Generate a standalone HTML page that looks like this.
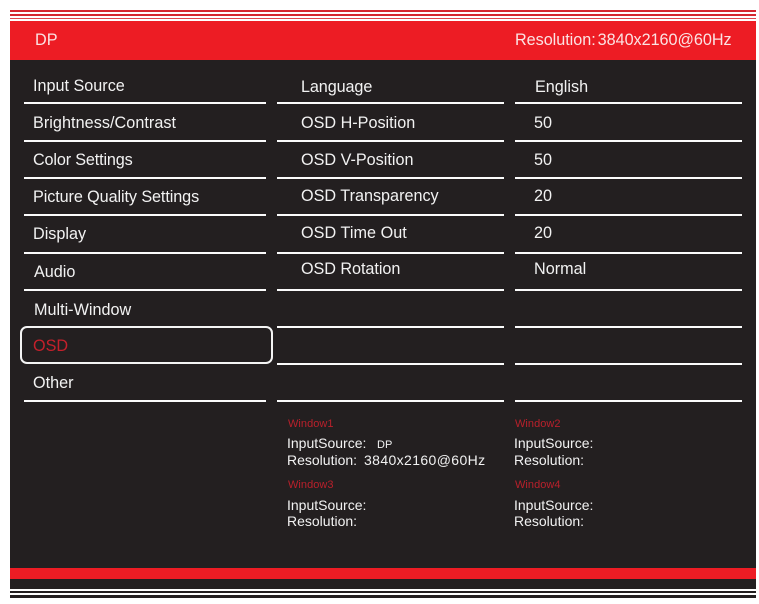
<!DOCTYPE html>
<html>
<head>
<meta charset="utf-8">
<style>
html,body{margin:0;padding:0;background:#fff}
#p{position:relative;width:759px;height:604px;overflow:hidden;background:#fff;font-family:"Liberation Sans",sans-serif;color:#f2f2f2}
#p div{position:absolute}
.l{height:2.4px;background:#fbfbfb}
.t{font-size:16.2px;line-height:20px;white-space:nowrap}
.s{font-size:14px;line-height:16px;white-space:nowrap}
.w{font-size:11px;line-height:14px;color:#b8202b;white-space:nowrap;letter-spacing:.05px}
</style>
</head>
<body>
<div id="p">
<div style="left:10px;top:10px;width:746px;height:2px;background:#d4272f"></div>
<div style="left:10px;top:14px;width:746px;height:2px;background:#d4272f"></div>
<div style="left:10px;top:18px;width:746px;height:1.4px;background:#e0454c"></div>
<div style="left:10px;top:21px;width:746px;height:39px;background:#ed1c24"></div>
<div style="left:10px;top:60px;width:746px;height:529px;background:#231f20"></div>
<div style="left:10px;top:568px;width:746px;height:11px;background:#ed1c24"></div>
<div style="left:10px;top:591px;width:746px;height:2px;background:#231f20"></div>
<div style="left:10px;top:595px;width:746px;height:3px;background:#231f20"></div>

<div class="t" style="left:35px;top:30px;color:#fbe3e3">DP</div>
<div class="t" style="left:515px;top:30px;color:#fbe3e3;letter-spacing:-.03px">Resolution:<span style="margin-left:2px">3840x2160@60Hz</span></div>

<div class="l" style="left:24px;top:102px;width:242px"></div>
<div class="l" style="left:24px;top:140px;width:242px"></div>
<div class="l" style="left:24px;top:177px;width:242px"></div>
<div class="l" style="left:24px;top:214px;width:242px"></div>
<div class="l" style="left:24px;top:252px;width:242px"></div>
<div class="l" style="left:24px;top:289px;width:242px"></div>
<div class="l" style="left:24px;top:400px;width:242px"></div>

<div class="l" style="left:277px;top:102px;width:227px"></div>
<div class="l" style="left:277px;top:140px;width:227px"></div>
<div class="l" style="left:277px;top:177px;width:227px"></div>
<div class="l" style="left:277px;top:214px;width:227px"></div>
<div class="l" style="left:277px;top:252px;width:227px"></div>
<div class="l" style="left:277px;top:289px;width:227px"></div>
<div class="l" style="left:277px;top:326px;width:227px"></div>
<div class="l" style="left:277px;top:363px;width:227px"></div>
<div class="l" style="left:277px;top:400px;width:227px"></div>

<div class="l" style="left:515px;top:102px;width:227px"></div>
<div class="l" style="left:515px;top:140px;width:227px"></div>
<div class="l" style="left:515px;top:177px;width:227px"></div>
<div class="l" style="left:515px;top:214px;width:227px"></div>
<div class="l" style="left:515px;top:252px;width:227px"></div>
<div class="l" style="left:515px;top:289px;width:227px"></div>
<div class="l" style="left:515px;top:326px;width:227px"></div>
<div class="l" style="left:515px;top:363px;width:227px"></div>
<div class="l" style="left:515px;top:400px;width:227px"></div>

<div style="left:20px;top:326px;width:249px;height:34px;border:2px solid #f4f4f4;border-radius:7px"></div>

<div class="t" style="left:33px;top:76px">Input Source</div>
<div class="t" style="left:33px;top:113px;letter-spacing:.05px">Brightness/Contrast</div>
<div class="t" style="left:33px;top:150px;letter-spacing:-.15px">Color Settings</div>
<div class="t" style="left:33px;top:187px;letter-spacing:-.09px">Picture Quality Settings</div>
<div class="t" style="left:33px;top:224px">Display</div>
<div class="t" style="left:34px;top:262px">Audio</div>
<div class="t" style="left:34px;top:300px">Multi-Window</div>
<div class="t" style="left:33px;top:336px;color:#c4202b">OSD</div>
<div class="t" style="left:33px;top:373px">Other</div>

<div class="t" style="left:301px;top:77px;letter-spacing:-.1px">Language</div>
<div class="t" style="left:301px;top:113px">OSD H-Position</div>
<div class="t" style="left:301px;top:150px">OSD V-Position</div>
<div class="t" style="left:301px;top:186px">OSD Transparency</div>
<div class="t" style="left:301px;top:223px;letter-spacing:.05px">OSD Time Out</div>
<div class="t" style="left:301px;top:259px;letter-spacing:-.05px">OSD Rotation</div>

<div class="t" style="left:535px;top:77px">English</div>
<div class="t" style="left:534px;top:113px">50</div>
<div class="t" style="left:534px;top:150px">50</div>
<div class="t" style="left:534px;top:186px">20</div>
<div class="t" style="left:534px;top:223px">20</div>
<div class="t" style="left:534px;top:259px">Normal</div>

<div class="w" style="left:288px;top:417px">Window1</div>
<div class="s" style="left:287px;top:435px">InputSource:</div>
<div style="left:377px;top:438px;font-size:11px;line-height:14px;white-space:nowrap">DP</div>
<div class="s" style="left:287px;top:452px">Resolution:</div>
<div class="s" style="left:364px;top:452px;letter-spacing:.38px">3840x2160@60Hz</div>

<div class="w" style="left:515px;top:417px">Window2</div>
<div class="s" style="left:514px;top:435px">InputSource:</div>
<div class="s" style="left:514px;top:452px">Resolution:</div>

<div class="w" style="left:288px;top:478px">Window3</div>
<div class="s" style="left:287px;top:497px">InputSource:</div>
<div class="s" style="left:287px;top:513px">Resolution:</div>

<div class="w" style="left:515px;top:478px">Window4</div>
<div class="s" style="left:514px;top:497px">InputSource:</div>
<div class="s" style="left:514px;top:513px">Resolution:</div>
</div>
</body>
</html>
